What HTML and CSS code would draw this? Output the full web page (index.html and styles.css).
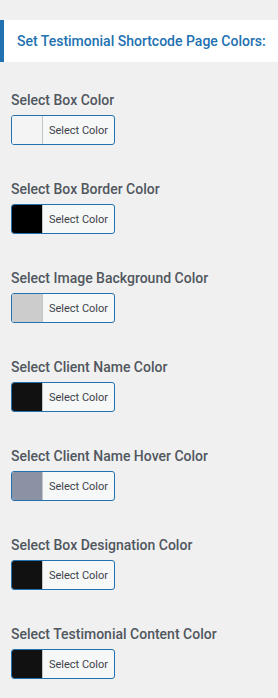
FILE: index.html
```html
<!DOCTYPE html>
<html lang="en">
<head>
  <meta charset="UTF-8">
  <meta name="viewport" content="width=device-width, initial-scale=1.0">
  <title>Testimonial Colors</title>
  <link rel="stylesheet" href="styles.css">
</head>
<body>

  <h2 class="section-title">Set Testimonial Shortcode Page Colors:</h2>

  <div class="color-list">
    <div class="color-field">
      <label>Select Box Color</label>
      <button class="color-picker"><span class="swatch swatch-light"></span><span class="picker-text">Select Color</span></button>
    </div>

    <div class="color-field">
      <label>Select Box Border Color</label>
      <button class="color-picker"><span class="swatch swatch-black"></span><span class="picker-text">Select Color</span></button>
    </div>

    <div class="color-field">
      <label>Select Image Background Color</label>
      <button class="color-picker"><span class="swatch swatch-grey"></span><span class="picker-text">Select Color</span></button>
    </div>

    <div class="color-field">
      <label>Select Client Name Color</label>
      <button class="color-picker"><span class="swatch swatch-dark"></span><span class="picker-text">Select Color</span></button>
    </div>

    <div class="color-field">
      <label>Select Client Name Hover Color</label>
      <button class="color-picker"><span class="swatch swatch-slate"></span><span class="picker-text">Select Color</span></button>
    </div>

    <div class="color-field">
      <label>Select Box Designation Color</label>
      <button class="color-picker"><span class="swatch swatch-dark"></span><span class="picker-text">Select Color</span></button>
    </div>

    <div class="color-field">
      <label>Select Testimonial Content Color</label>
      <button class="color-picker"><span class="swatch swatch-dark"></span><span class="picker-text">Select Color</span></button>
    </div>
  </div>

</body>
</html>
```

FILE: styles.css
```css
body {
  margin: 0;
  background-color: #f0f0f1;
  font-family: Roboto, "Liberation Sans", sans-serif;
}

.section-title {
  margin: 20px 0 0 0;
  height: 42px;
  display: flex;
  align-items: center;
  padding-left: 13px;
  background-color: #fff;
  border-left: 4px solid #2271b1;
  color: #2271b1;
  font-size: 14px;
  font-weight: 500;
}

.color-list {
  padding: 28px 11px 0 11px;
  display: flex;
  flex-direction: column;
  gap: 34px;
}

.color-field label {
  display: block;
  margin-bottom: 5px;
  line-height: 20px;
  font-size: 14px;
  font-weight: 500;
  color: #50575e;
}

.color-picker {
  display: flex;
  width: 104px;
  height: 30px;
  padding: 0;
  border: 1px solid #2271b1;
  border-radius: 3px;
  background-color: #f6f7f7;
  overflow: hidden;
  cursor: pointer;
}

.swatch {
  width: 30px;
  height: 100%;
  border-right: 1px solid #c3c4c7;
}

.picker-text {
  flex: 1;
  align-self: center;
  text-align: center;
  font-family: Roboto, "Liberation Sans", sans-serif;
  font-size: 11px;
  color: #3c434a;
}

.swatch-light { background-color: #f4f4f4; }
.swatch-black { background-color: #000; }
.swatch-grey  { background-color: #ccc; }
.swatch-dark  { background-color: #111; }
.swatch-slate { background-color: #8a92a3; }
```
